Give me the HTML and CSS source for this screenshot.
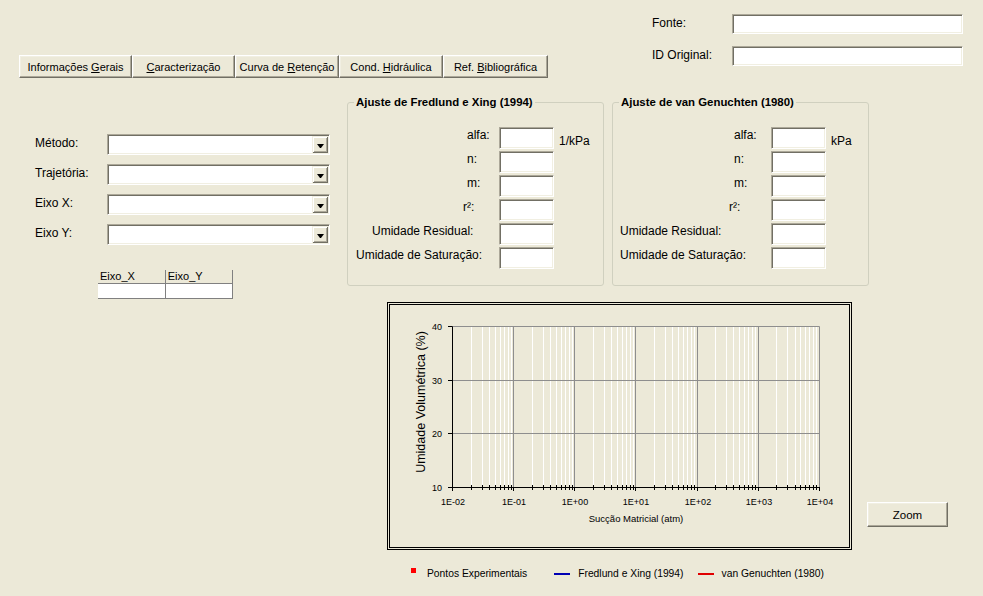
FILE: index.html
```html
<!DOCTYPE html>
<html lang="pt">
<head>
<meta charset="utf-8">
<title>Curva de Retenção</title>
<link rel="stylesheet" href="styles.css">
</head>
<body>
<div class="window">
  <div class="top">
    <div class="tabs">
      <div class="tab t1"><span>Informações <u>G</u>erais</span></div>
      <div class="tab t2"><span><u>C</u>aracterização</span></div>
      <div class="tab t3"><span>Curva de <u>R</u>etenção</span></div>
      <div class="tab t4"><span>Cond. <u>H</u>idráulica</span></div>
      <div class="tab t5"><span>Ref. <u>B</u>ibliográfica</span></div>
    </div>
    <div class="meta">
      <span class="meta-label">Fonte:</span><div class="field"></div>
      <span class="meta-label">ID Original:</span><div class="field"></div>
    </div>
  </div>

  <div class="main">
    <div class="left">
      <div class="combo-row"><span class="clabel">Método:</span><div class="combo"><span class="drop"></span></div></div>
      <div class="combo-row"><span class="clabel">Trajetória:</span><div class="combo"><span class="drop"></span></div></div>
      <div class="combo-row"><span class="clabel">Eixo X:</span><div class="combo"><span class="drop"></span></div></div>
      <div class="combo-row"><span class="clabel">Eixo Y:</span><div class="combo"><span class="drop"></span></div></div>
      <table class="grid">
        <tr><th>Eixo_X</th><th>Eixo_Y</th></tr>
        <tr><td></td><td></td></tr>
      </table>
    </div>

    <div class="center">
      <div class="groups">
        <fieldset class="group g1">
          <legend>Ajuste de Fredlund e Xing (1994)</legend>
          <div class="rows">
            <div class="prow"><span class="plabel a1">alfa:</span><div class="field pin"></div><span class="unit">1/kPa</span></div>
            <div class="prow"><span class="plabel a1">n:</span><div class="field pin"></div></div>
            <div class="prow"><span class="plabel a1">m:</span><div class="field pin"></div></div>
            <div class="prow"><span class="plabel r1">r²:</span><div class="field pin"></div></div>
            <div class="prow"><span class="plabel u1">Umidade Residual:</span><div class="field pin"></div></div>
            <div class="prow"><span class="plabel s1">Umidade de Saturação:</span><div class="field pin"></div></div>
          </div>
        </fieldset>
        <fieldset class="group g2">
          <legend>Ajuste de van Genuchten (1980)</legend>
          <div class="rows">
            <div class="prow"><span class="plabel a2">alfa:</span><div class="field pin"></div><span class="unit">kPa</span></div>
            <div class="prow"><span class="plabel a2">n:</span><div class="field pin"></div></div>
            <div class="prow"><span class="plabel a2">m:</span><div class="field pin"></div></div>
            <div class="prow"><span class="plabel r2">r²:</span><div class="field pin"></div></div>
            <div class="prow"><span class="plabel u2">Umidade Residual:</span><div class="field pin"></div></div>
            <div class="prow"><span class="plabel u2">Umidade de Saturação:</span><div class="field pin"></div></div>
          </div>
        </fieldset>
      </div>

      <div class="chart-row">
        <div class="chart">
          <svg class="plot" width="459" height="242" viewBox="0 0 459 242">
            <path stroke="#ffffff" stroke-width="1" fill="none" d="M81.5 21.5V182M92.5 21.5V182M99.5 21.5V182M105.5 21.5V182M110.5 21.5V182M114.5 21.5V182M118.5 21.5V182M121.5 21.5V182M142.5 21.5V182M153.5 21.5V182M160.5 21.5V182M166.5 21.5V182M171.5 21.5V182M175.5 21.5V182M179.5 21.5V182M182.5 21.5V182M203.5 21.5V182M214.5 21.5V182M221.5 21.5V182M227.5 21.5V182M232.5 21.5V182M236.5 21.5V182M240.5 21.5V182M243.5 21.5V182M264.5 21.5V182M275.5 21.5V182M282.5 21.5V182M288.5 21.5V182M293.5 21.5V182M297.5 21.5V182M301.5 21.5V182M304.5 21.5V182M325.5 21.5V182M336.5 21.5V182M343.5 21.5V182M349.5 21.5V182M354.5 21.5V182M358.5 21.5V182M362.5 21.5V182M365.5 21.5V182M386.5 21.5V182M397.5 21.5V182M405.5 21.5V182M410.5 21.5V182M415.5 21.5V182M419.5 21.5V182M423.5 21.5V182M426.5 21.5V182"/>
            <path stroke="#8e8e8e" stroke-width="1" fill="none" d="M123.5 21.5V182M184.5 21.5V182M245.5 21.5V182M307.5 21.5V182M368.5 21.5V182M429.5 21.5V182M62.5 21.5H429.5M62.5 75.5H429.5M62.5 128.5H429.5"/>
            <path stroke="#000000" stroke-width="1" fill="none" d="M62.5 21.5V182.5H430M58 21.5H62.5M58 75.5H62.5M58 128.5H62.5M58 182.5H62.5M62.5 182V186M123.5 182V186M184.5 182V186M245.5 182V186M307.5 182V186M368.5 182V186M429.5 182V186M81.5 180V185M92.5 180V185M99.5 180V185M105.5 180V185M110.5 180V185M114.5 180V185M118.5 180V185M121.5 180V185M142.5 180V185M153.5 180V185M160.5 180V185M166.5 180V185M171.5 180V185M175.5 180V185M179.5 180V185M182.5 180V185M203.5 180V185M214.5 180V185M221.5 180V185M227.5 180V185M232.5 180V185M236.5 180V185M240.5 180V185M243.5 180V185M264.5 180V185M275.5 180V185M282.5 180V185M288.5 180V185M293.5 180V185M297.5 180V185M301.5 180V185M304.5 180V185M325.5 180V185M336.5 180V185M343.5 180V185M349.5 180V185M354.5 180V185M358.5 180V185M362.5 180V185M365.5 180V185M386.5 180V185M397.5 180V185M405.5 180V185M410.5 180V185M415.5 180V185M419.5 180V185M423.5 180V185M426.5 180V185"/>
            <g class="ticks" text-anchor="end">
              <text x="52" y="25">40</text>
              <text x="52" y="79">30</text>
              <text x="52" y="132">20</text>
              <text x="52" y="186">10</text>
            </g>
            <g class="ticks" text-anchor="middle">
              <text x="63" y="200">1E-02</text>
              <text x="124" y="200">1E-01</text>
              <text x="185" y="200">1E+00</text>
              <text x="246" y="200">1E+01</text>
              <text x="308" y="200">1E+02</text>
              <text x="369" y="200">1E+03</text>
              <text x="430" y="200">1E+04</text>
            </g>
            <text class="xtitle" x="246" y="217" text-anchor="middle">Sucção Matricial (atm)</text>
            <text class="ytitle" transform="translate(34.5 97) rotate(-90)" text-anchor="middle">Umidade Volumétrica (%)</text>
          </svg>
        </div>
        <div class="btn zoom-btn"><span>Zoom</span></div>
      </div>

      <div class="legend">
        <span class="leg-square"></span><span class="leg-text">Pontos Experimentais</span>
        <span class="leg-line blue"></span><span class="leg-text">Fredlund e Xing (1994)</span>
        <span class="leg-line red"></span><span class="leg-text">van Genuchten (1980)</span>
      </div>
    </div>
  </div>
</div>
</body>
</html>
```

FILE: styles.css
```css
html, body {
  margin: 0;
  padding: 0;
}
body {
  background: #ECE9D8;
  font-family: "Liberation Sans", Arial, sans-serif;
  font-size: 12px;
  color: #000;
  width: 983px;
  height: 596px;
  overflow: hidden;
}
.window {
  width: 983px;
  height: 596px;
}

/* top */
.top {
  display: flex;
  align-items: flex-start;
  height: 78px;
}
.tabs {
  display: flex;
  margin: 55px 0 0 19px;
  height: 23px;
  font-size: 11px;
}
.tab, .btn {
  box-sizing: border-box;
  height: 23px;
  display: flex;
  align-items: center;
  justify-content: center;
  background: #ECE9D8;
  border-top: 1px solid #ffffff;
  border-left: 1px solid #ffffff;
  border-right: 1px solid #716F64;
  border-bottom: 1px solid #716F64;
  box-shadow: inset -1px -1px 0 #ACA899, inset 1px 1px 0 #F1EFE2;
  white-space: nowrap;
}
.t1 { width: 113px; }
.t2 { width: 103px; }
.t3 { width: 104px; }
.t4 { width: 104px; }
.t5 { width: 105px; }

.meta {
  margin: 14px 20px 0 auto;
  display: grid;
  grid-template-columns: 80px 231px;
  grid-auto-rows: 20px;
  row-gap: 12px;
  align-items: center;
}
.meta-label {
  padding-bottom: 2px;
}

.field {
  box-sizing: border-box;
  background: #ffffff;
  border-top: 1px solid #ACA899;
  border-left: 1px solid #ACA899;
  border-right: 1px solid #ffffff;
  border-bottom: 1px solid #ffffff;
  box-shadow: inset 1px 1px 0 #716F64, inset -1px -1px 0 #F1EFE2;
  height: 20px;
}

/* main */
.main {
  display: flex;
}
.left {
  box-sizing: border-box;
  width: 347px;
  padding: 56px 0 0 35px;
  display: flex;
  flex-direction: column;
  align-items: flex-start;
  gap: 9px;
}
.combo-row {
  display: flex;
  height: 21px;
}
.clabel {
  width: 72px;
  padding-top: 2px;
}
.combo {
  box-sizing: border-box;
  width: 223px;
  height: 21px;
  padding: 1px;
  display: flex;
  justify-content: flex-end;
  background: #ffffff;
  border-top: 1px solid #ACA899;
  border-left: 1px solid #ACA899;
  border-right: 1px solid #ffffff;
  border-bottom: 1px solid #ffffff;
  box-shadow: inset 1px 1px 0 #716F64, inset -1px -1px 0 #F1EFE2;
}
.drop {
  width: 16px;
  display: flex;
  align-items: center;
  justify-content: center;
  background: #ECE9D8;
  box-shadow: inset 1px 1px 0 #F1EFE2, inset -1px -1px 0 #716F64, inset 2px 2px 0 #ffffff, inset -2px -2px 0 #ACA899;
}
.drop::after {
  content: "";
  width: 1px;
  height: 0;
  margin-top: 2px;
  border-left: 3px solid transparent;
  border-right: 3px solid transparent;
  border-top: 4px solid #000;
}

.grid {
  border-collapse: collapse;
  table-layout: fixed;
  width: 135px;
  margin: 16px 0 0 63px;
  font-size: 11px;
}
.grid th {
  width: 67px;
  height: 13px;
  padding: 0 0 0 2px;
  box-sizing: border-box;
  text-align: left;
  font-weight: normal;
  line-height: 12px;
  border-right: 1px solid #808080;
  border-bottom: 1px solid #808080;
}
.grid td {
  height: 14px;
  padding: 0;
  background: #ffffff;
  border-right: 1px solid #808080;
  border-bottom: 1px solid #808080;
}

/* center */
.center {
  width: 636px;
  display: flex;
  flex-direction: column;
}
.groups {
  display: flex;
  gap: 8px;
  margin-top: 17px;
}
.group {
  box-sizing: border-box;
  width: 257px;
  height: 191px;
  margin: 0;
  padding: 0;
  min-width: 0;
  border: 1px solid #D0D0BF;
  border-radius: 3px;
}
.group legend {
  font-weight: bold;
  font-size: 11.4px;
  line-height: 14px;
  padding: 0 2px;
  margin-left: 6px;
}
.rows {
  padding-top: 18px;
  display: flex;
  flex-direction: column;
  gap: 2px;
}
.prow {
  display: flex;
  height: 22px;
}
.plabel {
  box-sizing: border-box;
  padding-top: 1px;
  white-space: nowrap;
}
.g1 .plabel { width: 151px; }
.g2 .plabel { width: 158px; }
.a1 { padding-left: 119px; }
.r1 { padding-left: 115px; }
.u1 { padding-left: 24px; }
.s1 { padding-left: 8px; }
.a2 { padding-left: 121px; }
.r2 { padding-left: 116px; }
.u2 { padding-left: 7px; }
.pin {
  width: 55px;
  height: 22px;
}
.unit {
  align-self: flex-end;
  padding-left: 5px;
  padding-bottom: 1px;
}

.chart-row {
  display: flex;
  margin-top: 16px;
}
.chart {
  box-sizing: border-box;
  margin-left: 40px;
  width: 465px;
  height: 248px;
  border: 3px double #000;
}
.plot {
  display: block;
}
.ticks {
  font-family: "Liberation Sans", Arial, sans-serif;
  font-size: 9px;
  fill: #000;
}
.xtitle {
  font-family: "Liberation Sans", Arial, sans-serif;
  font-size: 9.5px;
  fill: #000;
}
.ytitle {
  font-family: "Liberation Sans", Arial, sans-serif;
  font-size: 12.5px;
  fill: #000;
}
.zoom-btn {
  width: 81px;
  height: 25px;
  align-self: flex-end;
  margin: 0 0 23px 15px;
  font-size: 11.5px;
}

.legend {
  display: flex;
  align-items: center;
  margin: 17px 0 0 64px;
  height: 13px;
  font-size: 10.3px;
}
.leg-square {
  width: 5px;
  height: 5px;
  background: #ff0000;
  margin: 0 11px 6px 0;
}
.leg-text {
  white-space: nowrap;
}
.leg-line {
  width: 16px;
  height: 2px;
  margin-right: 8px;
}
.leg-line.blue {
  background: #0000b4;
  margin-left: 27px;
}
.leg-line.red {
  background: #e00000;
  margin-left: 14px;
}
```
